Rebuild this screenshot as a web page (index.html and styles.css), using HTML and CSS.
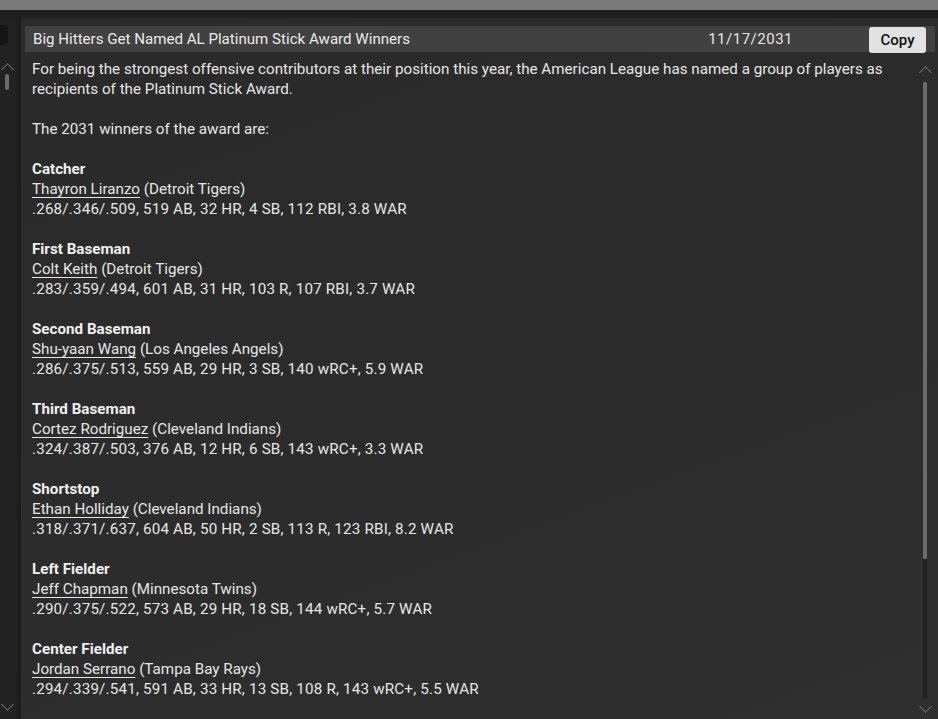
FILE: index.html
```html
<!DOCTYPE html>
<html lang="en">
<head>
  <meta charset="UTF-8">
  <title>Platinum Stick Award</title>
  <link rel="stylesheet" href="styles.css">
</head>
<body>
  <div class="topbar"></div>
  <div class="main">
    <!-- left list strip with its scrollbar -->
    <aside class="side">
      <div class="side-box"></div>
      <div class="side-scroll">
        <span class="chev up"></span>
        <div class="side-thumb"></div>
        <span class="chev down bottom"></span>
      </div>
    </aside>

    <section class="panel">
      <header class="news-head">
        <span class="news-title">Big Hitters Get Named AL Platinum Stick Award Winners</span>
        <span class="news-date">11/17/2031</span>
        <button class="copy-btn">Copy</button>
      </header>

      <div class="news-body">
        <div class="article">
          <p>For being the strongest offensive contributors at their position this year, the American League has named a group of players as recipients of the Platinum Stick Award.</p>
          <p>The 2031 winners of the award are:</p>

          <p><b>Catcher</b><br>
          <a href="#">Thayron Liranzo</a> (Detroit Tigers)<br>
          <span class="stats">.268/.346/.509, 519 AB, 32 HR, 4 SB, 112 RBI, 3.8 WAR</span></p>

          <p><b>First Baseman</b><br>
          <a href="#">Colt Keith</a> (Detroit Tigers)<br>
          <span class="stats">.283/.359/.494, 601 AB, 31 HR, 103 R, 107 RBI, 3.7 WAR</span></p>

          <p><b>Second Baseman</b><br>
          <a href="#">Shu-yaan Wang</a> (Los Angeles Angels)<br>
          <span class="stats">.286/.375/.513, 559 AB, 29 HR, 3 SB, 140 wRC+, 5.9 WAR</span></p>

          <p><b>Third Baseman</b><br>
          <a href="#">Cortez Rodriguez</a> (Cleveland Indians)<br>
          <span class="stats">.324/.387/.503, 376 AB, 12 HR, 6 SB, 143 wRC+, 3.3 WAR</span></p>

          <p><b>Shortstop</b><br>
          <a href="#">Ethan Holliday</a> (Cleveland Indians)<br>
          <span class="stats">.318/.371/.637, 604 AB, 50 HR, 2 SB, 113 R, 123 RBI, 8.2 WAR</span></p>

          <p><b>Left Fielder</b><br>
          <a href="#">Jeff Chapman</a> (Minnesota Twins)<br>
          <span class="stats">.290/.375/.522, 573 AB, 29 HR, 18 SB, 144 wRC+, 5.7 WAR</span></p>

          <p><b>Center Fielder</b><br>
          <a href="#">Jordan Serrano</a> (Tampa Bay Rays)<br>
          <span class="stats">.294/.339/.541, 591 AB, 33 HR, 13 SB, 108 R, 143 wRC+, 5.5 WAR</span></p>
        </div>

        <div class="vscroll">
          <span class="chev up"></span>
          <div class="track"><div class="thumb"></div></div>
          <span class="chev down"></span>
        </div>
      </div>
    </section>
  </div>
</body>
</html>
```

FILE: styles.css
```css
* {
  margin: 0;
  padding: 0;
  box-sizing: border-box;
}
body {
  background: #1f1f1f;
  color: #e6e6e6;
  font-family: Roboto, "Noto Sans", sans-serif;
  font-size: 15px;
  overflow: hidden;
  height: 719px;
}
a {
  color: inherit;
  text-decoration: underline;
  text-underline-offset: 3px;
  text-decoration-thickness: 1px;
}

.topbar {
  height: 10px;
  background: #7a7a7c;
}

.main {
  display: flex;
  height: 709px;
  padding-top: 8px;
}

/* left strip */
.side {
  width: 21px;
  background: #222;
  border-right: 4px solid #1c1c1c;
  display: flex;
  flex-direction: column;
  padding-top: 7px;
}
.side-box {
  width: 8px;
  height: 20px;
  background: #151515;
  border-radius: 0 4px 4px 0;
}
.side-scroll {
  flex: 1;
  display: flex;
  flex-direction: column;
  align-items: center;
  width: 14px;
  padding-top: 17px;
}
.side-thumb {
  width: 4px;
  height: 16px;
  margin-top: 3px;
  background: #6b6b6b;
  border-radius: 2px;
}
.side-scroll .bottom {
  margin-top: auto;
  margin-bottom: 7px;
}

/* chevrons */
.chev {
  display: block;
  width: 9px;
  height: 9px;
  border-left: 1.5px solid #707070;
  border-top: 1.5px solid #707070;
}
.chev.up {
  transform: translateY(3px) rotate(45deg);
}
.chev.down {
  transform: translateY(-3px) rotate(225deg);
}

/* main panel */
.panel {
  flex: 1;
  display: flex;
  flex-direction: column;
  background: linear-gradient(160deg, #2a2a2a 0%, #2c2c2c 60%, #2f2f2f 100%);
  padding: 8px 3px 0 4px;
}

.news-head {
  display: flex;
  align-items: center;
  height: 26px;
  background: #414141;
  padding-left: 8px;
  padding-right: 9px;
}
.news-title {
  flex: 1;
  color: #eaeaea;
  font-size: 15.1px;
}
.news-date {
  color: #e4e4e4;
  letter-spacing: 0.5px;
  margin-right: 76px;
}
.copy-btn {
  width: 57px;
  height: 26px;
  margin-top: 2px;
  background: #e2e2e2;
  color: #111;
  border: none;
  border-radius: 3px;
  font-family: Roboto, sans-serif;
  font-size: 15px;
  font-weight: 500;
  text-align: center;
}

.news-body {
  flex: 1;
  display: flex;
  padding-top: 7px;
}
.article {
  flex: 1;
  padding-left: 7px;
  padding-right: 22px;
  font-size: 15.2px;
  line-height: 20px;
}
.article p {
  margin-bottom: 20px;
}
.article b {
  font-weight: 700;
  color: #efefef;
}
.stats {
  letter-spacing: 0.18px;
}

.vscroll {
  width: 18px;
  display: flex;
  flex-direction: column;
  align-items: center;
  padding-top: 6px;
  padding-bottom: 5px;
  margin-right: 1px;
}
.track {
  flex: 1;
  width: 4px;
  margin: 8px 0 6px;
  background: #222;
}
.thumb {
  height: 477px;
  background: #6b6b6b;
  border-radius: 1px;
}
```
